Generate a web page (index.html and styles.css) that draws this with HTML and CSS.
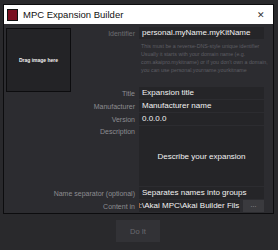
FILE: index.html
```html
<!DOCTYPE html>
<html>
<head>
<meta charset="utf-8">
<link rel="stylesheet" href="styles.css">
</head>
<body>
<div class="page">
  <div class="dialog">
    <div class="titlebar">
      <span class="app-icon"></span>
      <span class="title">MPC Expansion Builder</span>
      <span class="close">✕</span>
    </div>
    <div class="content">
      <div class="dropzone">Drag image here</div>
      <div class="label l-id">Identifier</div>
      <div class="input i-id">personal.myName.myKitName</div>
      <div class="help">This must be a reverse-DNS-style unique identifier<br>Usually it starts with your domain name (e.g.<br>com.akaipro.mykitname) or if you don't own a domain,<br>you can use personal.yourname.yourkitname</div>
      <div class="label l-title">Title</div>
      <div class="input i-title">Expansion title</div>
      <div class="label">Manufacturer</div>
      <div class="input">Manufacturer name</div>
      <div class="label">Version</div>
      <div class="input">0.0.0.0</div>
      <div class="label l-desc">Description</div>
      <div class="desc">Describe your expansion</div>
      <div class="label">Name separator (optional)</div>
      <div class="input">Separates names into groups</div>
      <div class="label">Content in</div>
      <div class="content-in">
        <div class="input path"><span>l:\Akai MPC\Akai Builder Fils</span></div>
        <div class="browse">...</div>
      </div>
    </div>
  </div>
  <div class="footer">
    <div class="doit">Do It</div>
  </div>
</div>
</body>
</html>
```
FILE: styles.css
```css
html, body {
  margin: 0;
  padding: 0;
}
body {
  width: 278px;
  height: 250px;
  overflow: hidden;
  background: #29292c;
  font-family: "Liberation Sans", Arial, sans-serif;
}
.page {
  padding: 4px 6px 0 3px;
}
.dialog {
  width: 269px;
  border: 1px solid #0c0c0e;
  background: #2c2c30;
}
.titlebar {
  height: 19px;
  background: #ffffff;
  display: flex;
  align-items: center;
  padding: 0 4px 0 3px;
}
.app-icon {
  width: 9px;
  height: 10px;
  background: #7a1020;
  border: 1px solid #111;
  margin-right: 5px;
}
.title {
  font-size: 9.5px;
  color: #111;
  flex: 1;
}
.close {
  font-size: 9px;
  color: #333;
  margin-right: 4px;
}
.content {
  display: grid;
  grid-template-columns: 131px 125px;
  column-gap: 4px;
  row-gap: 1px;
  padding: 3px 0 1px 0;
  align-items: center;
}
.dropzone {
  grid-column: 1;
  grid-row: 1 / 4;
  align-self: start;
  justify-self: start;
  margin-left: 2px;
  margin-top: 1px;
  width: 63px;
  height: 62px;
  background: #232326;
  border: 1px solid #0c0c0e;
  display: flex;
  align-items: center;
  justify-content: center;
  color: #f0f0f0;
  font-size: 5px;
  font-weight: bold;
}
.label {
  grid-column: 1;
  justify-self: end;
  font-size: 7px;
  color: #8c8c90;
}
.l-id { grid-row: 1; align-self: start; margin-top: 3px; color: #6c6c70; }
.i-id { grid-row: 1; }
.help {
  grid-column: 2;
  grid-row: 2;
  font-size: 5.3px;
  line-height: 8px;
  color: #5e5e64;
  padding: 2px 0 12px 2px;
  white-space: nowrap;
}
.l-title { grid-row: 3; }
.i-title { grid-row: 3; }
.input {
  grid-column: 2;
  height: 12px;
  line-height: 12px;
  background: #252528;
  color: #f2f2f2;
  font-size: 8px;
  padding: 0 3px;
  white-space: nowrap;
  overflow: hidden;
}
.l-desc { align-self: start; margin-top: 2px; }
.desc {
  grid-column: 2;
  height: 60px;
  background: #252528;
  color: #f2f2f2;
  font-size: 8px;
  display: flex;
  align-items: center;
  justify-content: center;
}
.content-in {
  grid-column: 2;
  display: flex;
  gap: 3px;
}
.path {
  flex: 1;
  padding: 0;
}
.path span { margin-left: -1px; }
.browse {
  width: 21px;
  height: 12px;
  background: #3a3a3e;
  color: #9a9aa0;
  font-size: 7px;
  line-height: 9px;
  text-align: center;
}
.footer {
  display: flex;
  padding: 6px 0 0 113px;
}
.doit {
  width: 44px;
  height: 22px;
  background: #323236;
  color: #6a6a70;
  font-size: 7.5px;
  display: flex;
  align-items: center;
  justify-content: center;
}
```
